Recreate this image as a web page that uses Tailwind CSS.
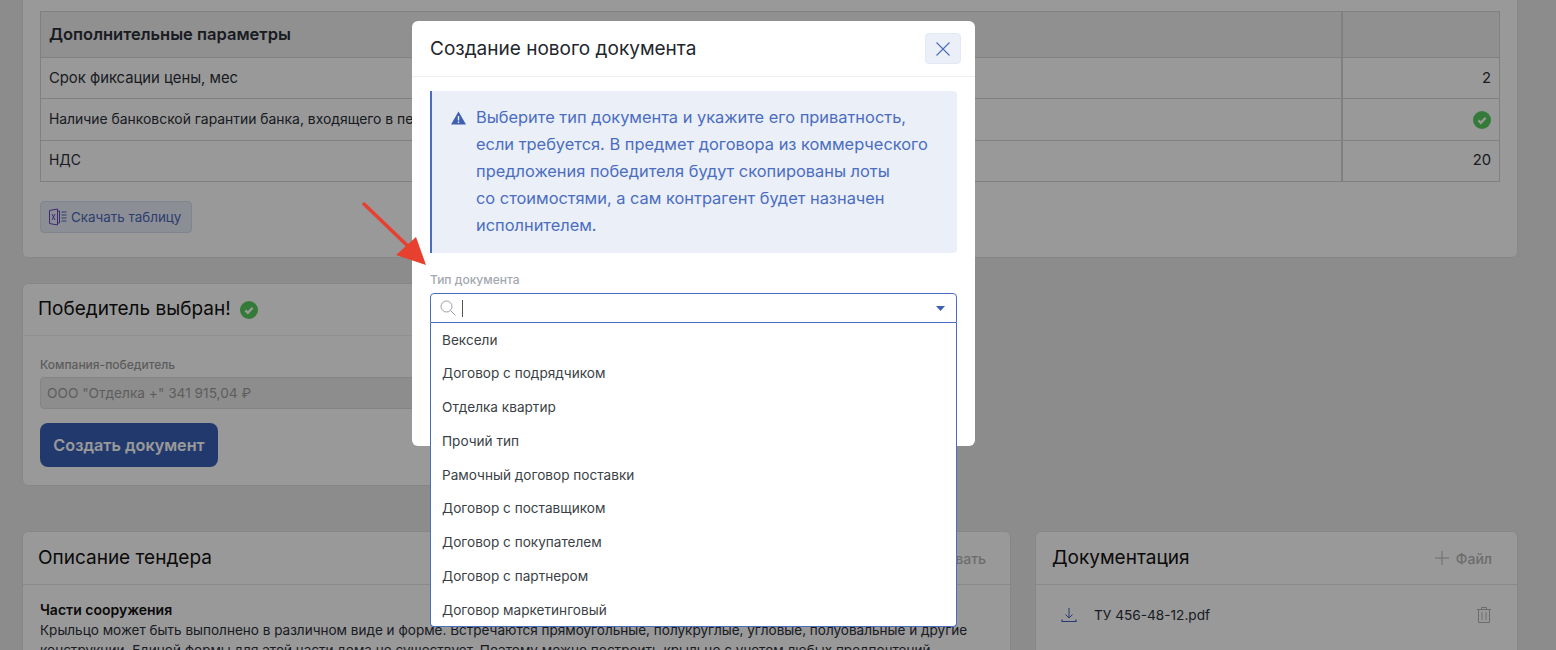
<!DOCTYPE html>
<html lang="ru">
<head>
<meta charset="utf-8">
<title>Создание нового документа</title>
<script src="https://cdn.jsdelivr.net/npm/@tailwindcss/browser@4"></script>
</head>
<body class="relative h-[650px] w-[1556px] overflow-hidden bg-[#e9e9e9] font-['Inter',sans-serif] text-[#2b2f38]">

<!-- page behind the modal -->
<div class="-mt-[20px] ml-[22px] flex w-[1496px] flex-col">
    <section class="h-[278px] rounded-md border border-[#e2e2e2] bg-white px-[17px] pt-[30px]">
        <table class="w-[1460px] table-fixed border-collapse text-[13.900px]">
            <tbody>
                <tr class="h-[46px] bg-[#f0f0f0]">
                    <td class="border border-[#d5d5d5] px-2 pb-[1px] text-[16.500px] font-semibold">Дополнительные параметры</td>
                    <td class="w-[158px] border border-[#d5d5d5] border-l-2"></td>
                </tr>
                <tr class="h-[41px]">
                    <td class="border border-[#d5d5d5] px-2 text-[14.800px]">Срок фиксации цены, мес</td>
                    <td class="border border-[#d5d5d5] border-l-2 px-2 text-right text-[14.800px]">2</td>
                </tr>
                <tr class="h-[42px]">
                    <td class="border border-[#d5d5d5] px-2 pb-[1px]">Наличие банковской гарантии банка, входящего в перечень</td>
                    <td class="border border-[#d5d5d5] border-l-2 px-2">
                        <svg class="ml-auto h-[18px] w-[18px]" viewBox="0 0 16 16"><circle cx="8" cy="8" r="8" fill="#58cc60"/><path d="M4.800 8.300l2.200 2.200 4.200-4.600" fill="none" stroke="#fff" stroke-width="2"/></svg>
                    </td>
                </tr>
                <tr class="h-[41px]">
                    <td class="border border-[#d5d5d5] px-2 pb-[1px]">НДС</td>
                    <td class="border border-[#d5d5d5] border-l-2 px-2 pb-[1px] text-right text-[14.800px]">20</td>
                </tr>
            </tbody>
        </table>
        <button class="mt-[19px] flex h-[32px] w-[152px] items-center gap-[3px] rounded-[4px] border border-[#d4dcf0] bg-[#e9edf8] pl-[7px] text-[13.400px] text-[#4a68b8]">
            <svg class="h-[18px] w-[20px]" viewBox="0 0 19 18" fill="none" stroke="#6a45c0" stroke-width="1"><path d="M1 2.500l8-1.500v16l-8-1.500z"/><path d="M9 3h2v12h-2"/><path d="M3.500 6l3 6M6.500 6l-3 6"/><path d="M13 4h5M13 7h5M13 10h5M13 13h5" stroke="#4a68b8"/></svg>
            Скачать таблицу
        </button>
    </section>

    <section class="mt-[25px] h-[203px] w-[600px] rounded-md border border-[#e2e2e2] bg-white">
        <div class="flex h-[52px] items-center gap-[9px] border-b border-[#f0f0f0] px-[15px] text-[19px] font-normal text-[#111]">
            Победитель выбран!
            <svg class="h-[18px] w-[18px]" viewBox="0 0 16 16"><circle cx="8" cy="8" r="8" fill="#58cc60"/><path d="M4.800 8.300l2.200 2.200 4.200-4.600" fill="none" stroke="#fff" stroke-width="2"/></svg>
        </div>
        <div class="px-[17px] pt-[22px]">
            <label class="block text-[12px] font-medium leading-[14px] text-[#9a9a9a]">Компания-победитель</label>
            <div class="mt-[5px] flex h-[32px] items-center rounded-[4px] border border-[#ddd] bg-[#ececec] px-[6px] text-[13.700px] text-[#9c9c9c]">ООО "Отделка +" 341 915,04 ₽</div>
            <button class="mt-[14px] h-[44px] w-[178px] rounded-lg bg-[#3a5fb8] text-[16.200px] font-semibold text-white">Создать документ</button>
        </div>
    </section>

    <div class="mt-[45px] flex gap-[24px]">
        <section class="h-[200px] w-[989px] rounded-md border border-[#e2e2e2] bg-white">
            <div class="flex h-[53px] items-center justify-between border-b border-[#e4e4e4] px-[15px]">
                <h2 class="text-[19px] font-normal text-[#111]">Описание тендера</h2>
                <span class="pr-[9px] text-[14px] font-medium text-[#b5b5b5]">Редактировать</span>
            </div>
            <div class="px-[17px] pt-[15px] text-[13.540px] leading-[20px] text-[#2b2f38]">
                <p class="text-[14px] font-semibold text-[#111]">Части сооружения</p>
                <p class="w-[950px]">Крыльцо может быть выполнено в различном виде и форме. Встречаются прямоугольные, полукруглые, угловые, полуовальные и другие конструкции. Единой формы для этой части дома не существует. Поэтому можно построить крыльцо с учетом любых предпочтений</p>
            </div>
        </section>
        <section class="h-[200px] w-[483px] rounded-md border border-[#e2e2e2] bg-white">
            <div class="flex h-[53px] items-center justify-between border-b border-[#e4e4e4] px-[16px]">
                <h2 class="text-[19px] font-normal text-[#111]">Документация</h2>
                <span class="flex items-center gap-[7px] pr-[9px] text-[14px] font-medium text-[#b5b5b5]">
                    <svg class="h-[14px] w-[14px]" viewBox="0 0 14 14" stroke="#b5b5b5"><path d="M7 0v14M0 7h14"/></svg>
                    Файл
                </span>
            </div>
            <div class="flex items-center justify-between pl-[25px] pr-[26px] pt-[20px] text-[13.650px] text-[#2b2f38]">
                <span class="flex items-center gap-[17px]">
                    <svg class="h-[16px] w-[16px]" viewBox="0 0 16 16" fill="none" stroke="#3f62c0"><path d="M8 1v10M4.500 7.500L8 11l3.500-3.500"/><path d="M1 12.500v2h14v-2" stroke-width="1.200"/></svg>
                    ТУ 456-48-12.pdf
                </span>
                <svg class="h-[16px] w-[14px]" viewBox="0 0 14 16" fill="none" stroke="#b5b5b5"><path d="M0 2.500h14M4.500 2.500V.500h5v2M1.500 2.500v13h11v-13M5 5v8M9 5v8"/></svg>
            </div>
        </section>
    </div>
</div>

<div class="absolute inset-0 bg-black/40"></div>

<!-- modal -->
<div class="absolute left-[412px] top-[21px] h-[425px] w-[563px] rounded-md bg-white">
    <div class="flex h-[56px] items-center justify-between border-b border-[#eeeeee] pl-[18px] pr-[14px]">
        <h2 class="pt-[2px] text-[19px] font-normal text-[#23262d]">Создание нового документа</h2>
        <button class="flex h-[31px] w-[36px] items-center justify-center rounded-[4px] border border-[#e2e8f5] bg-[#ebeff8]">
            <svg class="h-[14px] w-[14px]" viewBox="0 0 14 14" stroke="#4a6dc0" stroke-width="1.100"><path d="M.5.500l13 13M13.500.500l-13 13"/></svg>
        </button>
    </div>
    <div class="mx-[18px] mt-[14px] flex h-[162px] rounded-r-[4px] border-l-2 border-[#4a6dc0] bg-[#ebeff8] pl-[19px] pt-[13px] text-[16.400px] leading-[27px] text-[#4a6dc0]">
        <svg class="mr-[10px] mt-[7px] h-[14px] w-[15px] shrink-0" viewBox="0 0 15 14"><path fill-rule="evenodd" fill="#3f5fb0" d="M7.500 0.500L15 13.500H0zM6.800 5v4.500h1.400V5zM6.800 10.500v1.500h1.400v-1.500z"/></svg>
        <p class="w-[455px]">Выберите тип документа и укажите его приватность, если требуется. В предмет договора из коммерческого предложения победителя будут скопированы лоты<br>со стоимостями, а сам контрагент будет назначен исполнителем.</p>
    </div>
    <label class="mx-[18px] mt-[20px] block text-[12px] font-medium leading-[14px] text-[#a3a7b0]">Тип документа</label>
</div>

<!-- open select overflows the modal -->
<div class="absolute left-[430px] top-[293px] w-[527px]">
    <div class="flex h-[30px] items-center rounded-t-[4px] border border-[#4a6dc0] bg-white pl-[9px] pr-[11px]">
        <svg class="h-[16px] w-[16px]" viewBox="0 0 16 16" fill="none" stroke="#9a9fa8"><circle cx="6.500" cy="6.500" r="5.500"/><path d="M10.500 10.500L15.500 15.500"/></svg>
        <span class="ml-[6px] h-[17px] w-[1px] bg-[#555]"></span>
        <svg class="ml-auto h-[5px] w-[9px]" viewBox="0 0 9 5"><path d="M0 0h9L4.500 5z" fill="#3f5fb0"/></svg>
    </div>
    <ul class="h-[304px] rounded-b-[4px] border border-t-0 border-[#4a6dc0] bg-white text-[13.600px] text-[#3b3f46]">
        <li class="flex h-[33.750px] items-center px-[11px]">Вексели</li>
        <li class="flex h-[33.750px] items-center px-[11px]">Договор с подрядчиком</li>
        <li class="flex h-[33.750px] items-center px-[11px]">Отделка квартир</li>
        <li class="flex h-[33.750px] items-center px-[11px]">Прочий тип</li>
        <li class="flex h-[33.750px] items-center px-[11px]">Рамочный договор поставки</li>
        <li class="flex h-[33.750px] items-center px-[11px]">Договор с поставщиком</li>
        <li class="flex h-[33.750px] items-center px-[11px]">Договор с покупателем</li>
        <li class="flex h-[33.750px] items-center px-[11px]">Договор с партнером</li>
        <li class="flex h-[33.750px] items-center px-[11px]">Договор маркетинговый</li>
    </ul>
</div>

<!-- annotation arrow -->
<svg class="absolute left-[355px] top-[195px] h-[80px] w-[80px]" viewBox="0 0 80 80">
    <path d="M9 9L58 56" stroke="#e8402f" stroke-width="3.500" stroke-linecap="round"/>
    <path d="M71 70L41 60 61 42z" fill="#e8402f"/>
</svg>
</body>
</html>
